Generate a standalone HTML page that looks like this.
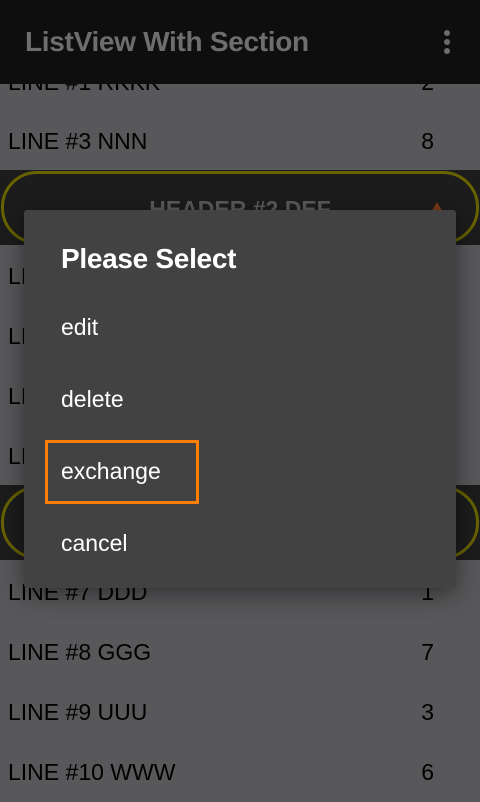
<!DOCTYPE html>
<html><head><meta charset="utf-8"><style>
*{margin:0;padding:0;box-sizing:border-box}
body{width:480px;height:800px;overflow:hidden;background:#58585a;font-family:"Liberation Sans",Roboto,sans-serif;position:relative}
.bar{position:absolute;left:0;top:0;width:480px;height:84px;background:#0e0e0e;z-index:5}
.bar .t{position:absolute;left:25px;top:26px;font-size:28px;color:#6e6e6e;font-weight:bold;letter-spacing:-0.3px}
.dot{position:absolute;left:444px;width:6px;height:6px;border-radius:3px;background:#6c6c6c}
.row{position:absolute;left:0;width:480px;height:60px;font-size:23px;color:#000;line-height:60px}
.row .l{position:absolute;left:8px}
.row .r{position:absolute;right:46px}
.hdr{position:absolute;left:0;width:480px;height:75px;background:#1c1c1c}
.hdr .b{position:absolute;left:1px;top:1px;right:1px;bottom:1px;border:3px solid #686200;border-radius:36px}
.hdr .ht{position:absolute;left:0;width:480px;text-align:center;top:26px;font-size:23px;font-weight:bold;color:#5a5a5a}
.tri{position:absolute;left:430px;top:32px;width:0;height:0;border-left:7px solid transparent;border-right:7px solid transparent;border-bottom:12px solid #7a3a1a}
.dlg{position:absolute;left:24px;top:210px;width:432px;height:378px;background:#424242;border-radius:3px;box-shadow:0 6px 24px rgba(0,0,0,.45);z-index:10}
.dlg .title{position:absolute;left:37px;top:33px;font-size:28px;font-weight:bold;color:#fff;letter-spacing:-0.3px}
.it{position:absolute;left:37px;font-size:23px;color:#fff}
.sel{position:absolute;left:21px;top:230px;width:154px;height:64px;border:3px solid #ff8000}
</style></head><body>
<div class="bar"><div class="t">ListView With Section</div>
<div class="dot" style="top:30px"></div><div class="dot" style="top:39px"></div><div class="dot" style="top:48px"></div></div>
<div class="row" style="top:52px"><span class="l">LINE #1 RKKK</span><span class="r">2</span></div>
<div class="row" style="top:111px"><span class="l">LINE #3 NNN</span><span class="r">8</span></div>
<div class="hdr" style="top:170px"><div class="b"></div><div class="ht">HEADER #2 DEF</div><div class="tri"></div></div>
<div class="row" style="top:246px"><span class="l">LINE #4</span><span class="r">1</span></div>
<div class="row" style="top:306px"><span class="l">LINE #5</span><span class="r">1</span></div>
<div class="row" style="top:366px"><span class="l">LINE #6</span><span class="r">1</span></div>
<div class="row" style="top:426px"><span class="l">LINE #6</span><span class="r">1</span></div>
<div class="hdr" style="top:485px"><div class="b"></div><div class="ht">HEADER #3</div></div>
<div class="row" style="top:562px"><span class="l">LINE #7 DDD</span><span class="r">1</span></div>
<div class="row" style="top:622px"><span class="l">LINE #8 GGG</span><span class="r">7</span></div>
<div class="row" style="top:682px"><span class="l">LINE #9 UUU</span><span class="r">3</span></div>
<div class="row" style="top:742px"><span class="l">LINE #10 WWW</span><span class="r">6</span></div>
<div class="dlg">
<div class="title">Please Select</div>
<div class="it" style="top:104px">edit</div>
<div class="it" style="top:176px">delete</div>
<div class="it" style="top:248px">exchange</div>
<div class="it" style="top:320px">cancel</div>
<div class="sel"></div>
</div>
</body></html>
